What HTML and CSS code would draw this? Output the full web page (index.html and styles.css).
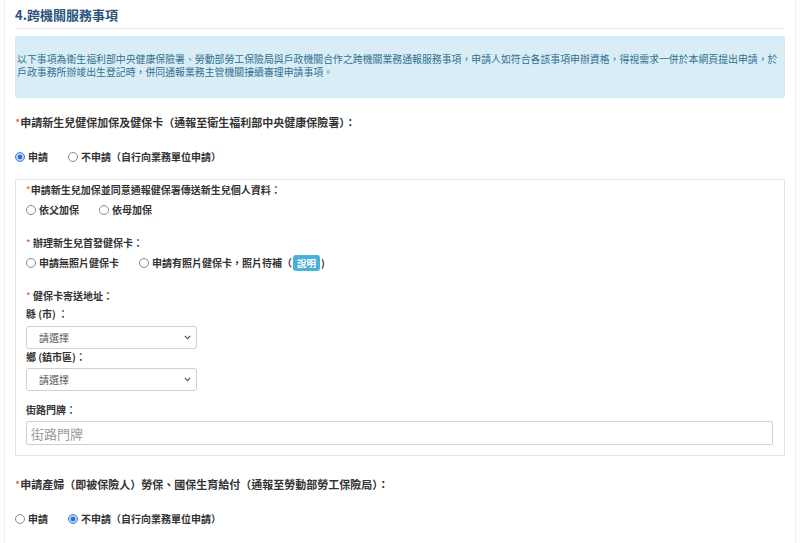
FILE: index.html
```html
<!DOCTYPE html>
<html lang="zh-Hant">
<head>
  <meta charset="UTF-8">
  <meta name="viewport" content="width=device-width, initial-scale=1.0">
  <title>跨機關服務事項</title>
  <link rel="stylesheet" href="styles.css">
</head>
<body>

  <!-- Section container -->
  <div class="page">
    <h3 class="section-title">4.跨機關服務事項</h3>

    <div class="alert-info">
      以下事項為衛生福利部中央健康保險署、勞動部勞工保險局與戶政機關合作之跨機關業務通報服務事項，申請人如符合各該事項申辦資格，得視需求一併於本網頁提出申請，於<br>
      戶政事務所辦竣出生登記時，併同通報業務主管機關接續審理申請事項。
    </div>

    <!-- Health insurance -->
    <div class="question"><span class="req">*</span>申請新生兒健保加保及健保卡（通報至衛生福利部中央健康保險署）：</div>
    <div class="radio-row q-radios">
      <label class="radio"><input type="radio" name="nhi" checked>申請</label>
      <label class="radio"><input type="radio" name="nhi">不申請（自行向業務單位申請）</label>
    </div>

    <div class="panel">
      <div class="field-label first"><span class="req">*</span>申請新生兒加保並同意通報健保署傳送新生兒個人資料：</div>
      <div class="radio-row">
        <label class="radio"><input type="radio" name="parent">依父加保</label>
        <label class="radio"><input type="radio" name="parent">依母加保</label>
      </div>

      <div class="field-label gap"><span class="req">*</span> 辦理新生兒首發健保卡：</div>
      <div class="radio-row">
        <label class="radio"><input type="radio" name="card">申請無照片健保卡</label>
        <label class="radio"><input type="radio" name="card">申請有照片健保卡，照片待補（<span class="badge">說明</span>)</label>
      </div>

      <div class="field-label gap"><span class="req">*</span> 健保卡寄送地址：</div>
      <div class="field-label sub">縣 (市) ：</div>
      <div class="select-wrap">
        <select class="form-select"><option>請選擇</option></select>
        <svg class="chevron" width="7" height="5" viewBox="0 0 7 5"><path d="M0.8 0.9 L3.5 3.7 L6.2 0.9" fill="none" stroke="#555" stroke-width="1.2"/></svg>
      </div>
      <div class="field-label tight">鄉 (鎮市區)：</div>
      <div class="select-wrap">
        <select class="form-select"><option>請選擇</option></select>
        <svg class="chevron" width="7" height="5" viewBox="0 0 7 5"><path d="M0.8 0.9 L3.5 3.7 L6.2 0.9" fill="none" stroke="#555" stroke-width="1.2"/></svg>
      </div>
      <div class="field-label street">街路門牌：</div>
      <input class="form-input" type="text" placeholder="街路門牌">
    </div>

    <!-- Labor insurance -->
    <div class="question second"><span class="req">*</span>申請產婦（即被保險人）勞保、國保生育給付（通報至勞動部勞工保險局）：</div>
    <div class="radio-row q-radios">
      <label class="radio"><input type="radio" name="bli">申請</label>
      <label class="radio"><input type="radio" name="bli" checked>不申請（自行向業務單位申請）</label>
    </div>
  </div>

</body>
</html>
```

FILE: styles.css
```css
/* Basic Reset */
* {
  margin: 0;
  padding: 0;
  box-sizing: border-box;
}

body {
  background-color: #fff;
  color: #333;
  font-family: "Noto Sans CJK TC", "Noto Sans", sans-serif;
}

/* Page container */
.page {
  margin: 0 4px;
  padding: 6px 10px 30px;
  min-height: 543px;
  border-left: 1px solid #f0f0f0;
  border-right: 1px solid #f0f0f0;
}

.section-title {
  font-size: 13px;
  line-height: 18px;
  font-weight: bold;
  color: #2b557c;
  padding-bottom: 4px;
  border-bottom: 1px solid #e8e8e8;
}

/* Info box */
.alert-info {
  margin-top: 7px;
  padding: 16px 1px 18px;
  background-color: #d9edf7;
  border: 1px solid #d3e9f4;
  border-radius: 2px;
  color: #31708f;
  font-size: 9.9px;
  line-height: 13px;
  white-space: nowrap;
}

/* Questions */
.question {
  margin-top: 16px;
  font-size: 11px;
  line-height: 16px;
  font-weight: bold;
  color: #333;
}

.question.second {
  margin-top: 20px;
}

.req {
  color: #d9534f;
  font-weight: normal;
}

.radio-row {
  display: flex;
  gap: 20px;
  font-size: 10px;
  line-height: 16px;
  font-weight: bold;
  margin-top: 5px;
}

.q-radios {
  margin-top: 19px;
}

.radio {
  display: flex;
  align-items: center;
}

.radio input {
  appearance: none;
  width: 10px;
  height: 10px;
  margin: 0 3px 0 0;
  border: 1px solid #8a8a8a;
  border-radius: 50%;
  background: #fff;
}

.radio input:checked {
  border-color: #3d7fd9;
  background: radial-gradient(circle, #2e6ccf 0 2px, #b9d2f4 2.6px);
}

.badge {
  display: inline-block;
  margin: 0 1px;
  padding: 0 4px;
  line-height: 16px;
  border-radius: 3px;
  background-color: #4cb1d6;
  color: #fff;
  font-size: 9.5px;
}

/* Inner panel */
.panel {
  margin-top: 14px;
  padding: 3px 11px 10px 10px;
  border: 1px solid #e4e4e4;
}

.field-label {
  font-size: 10px;
  line-height: 14px;
  font-weight: bold;
  color: #333;
  margin-top: 19px;
}

.field-label.first {
  margin-top: 0;
}

.field-label.gap {
  margin-top: 18px;
}

.field-label.sub {
  margin-top: 4px;
}

.field-label.tight {
  margin-top: 1px;
}

.field-label.street {
  margin-top: 12px;
}

.select-wrap {
  position: relative;
  width: 171px;
  margin-top: 5px;
}

.field-label.tight + .select-wrap {
  margin-top: 4px;
}

.form-select {
  appearance: none;
  display: block;
  width: 171px;
  height: 23px;
  padding-left: 12px;
  border: 1px solid #d0d0d0;
  border-radius: 3px;
  background: #fff;
  color: #555;
  font-family: inherit;
  font-size: 10px;
}

.chevron {
  position: absolute;
  right: 6px;
  top: 9px;
}

.form-input {
  display: block;
  width: 747px;
  height: 24px;
  margin-top: 4px;
  padding-left: 4px;
  border: 1px solid #d0d0d0;
  border-radius: 2px;
  font-family: inherit;
  font-size: 13px;
}

.form-input::placeholder {
  color: #9a9a9a;
}
```
